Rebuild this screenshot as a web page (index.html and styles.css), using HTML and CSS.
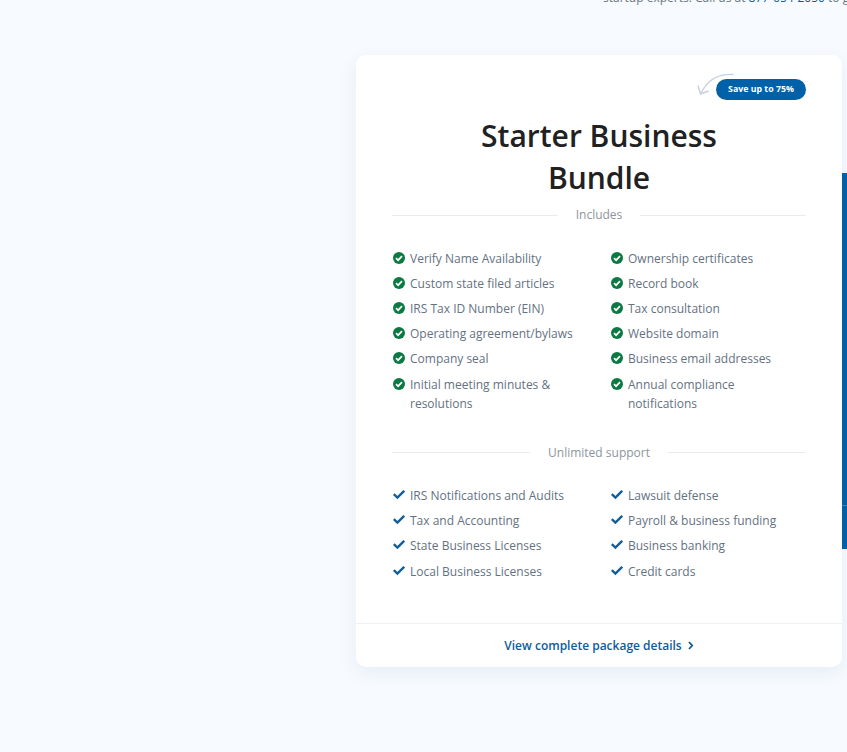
FILE: index.html
```html
<!DOCTYPE html>
<html lang="en">
<head>
  <meta charset="UTF-8" />
  <title>Starter Business Bundle</title>
  <link rel="stylesheet" href="styles.css">
</head>
<body>
  <p class="intro">startup experts. Call us at <a href="#">877-654-2050</a> to get</p>

  <div class="layout">
    <section class="card">
      <div class="card-body">
        <div class="save-row">
          <svg class="save-arrow" width="38" height="24" viewBox="0 0 38 24" fill="none">
            <path d="M36.5 1.5C24 0.5 12 4.5 4 20" stroke="#c8d0dc" stroke-width="1.4" />
            <path d="M1 12.5L3.5 21L11.5 18" stroke="#c8d0dc" stroke-width="1.4" />
          </svg>
          <span class="save-badge">Save up to 75%</span>
        </div>

        <h2 class="card-title">Starter Business<br>Bundle</h2>

        <div class="divider"><span>Includes</span></div>
        <ul class="feature-list">
          <li><svg class="icon"><use href="#circle-check" /></svg>Verify Name Availability</li>
          <li><svg class="icon"><use href="#circle-check" /></svg>Ownership certificates</li>
          <li><svg class="icon"><use href="#circle-check" /></svg>Custom state filed articles</li>
          <li><svg class="icon"><use href="#circle-check" /></svg>Record book</li>
          <li><svg class="icon"><use href="#circle-check" /></svg>IRS Tax ID Number (EIN)</li>
          <li><svg class="icon"><use href="#circle-check" /></svg>Tax consultation</li>
          <li><svg class="icon"><use href="#circle-check" /></svg>Operating agreement/bylaws</li>
          <li><svg class="icon"><use href="#circle-check" /></svg>Website domain</li>
          <li><svg class="icon"><use href="#circle-check" /></svg>Company seal</li>
          <li><svg class="icon"><use href="#circle-check" /></svg>Business email addresses</li>
          <li><svg class="icon"><use href="#circle-check" /></svg>Initial meeting minutes &amp; resolutions</li>
          <li><svg class="icon"><use href="#circle-check" /></svg>Annual compliance notifications</li>
        </ul>

        <div class="divider divider-support"><span>Unlimited support</span></div>
        <ul class="feature-list feature-list-support">
          <li><svg class="icon"><use href="#check" /></svg>IRS Notifications and Audits</li>
          <li><svg class="icon"><use href="#check" /></svg>Lawsuit defense</li>
          <li><svg class="icon"><use href="#check" /></svg>Tax and Accounting</li>
          <li><svg class="icon"><use href="#check" /></svg>Payroll &amp; business funding</li>
          <li><svg class="icon"><use href="#check" /></svg>State Business Licenses</li>
          <li><svg class="icon"><use href="#check" /></svg>Business banking</li>
          <li><svg class="icon"><use href="#check" /></svg>Local Business Licenses</li>
          <li><svg class="icon"><use href="#check" /></svg>Credit cards</li>
        </ul>
      </div>

      <a class="card-footer" href="#">
        View complete package details
        <svg width="6" height="9" viewBox="0 0 6 9" fill="none">
          <path d="M1 1L4.2 4.5L1 8" stroke="#0f5c99" stroke-width="1.8" />
        </svg>
      </a>
    </section>

    <div class="side-panel"></div>
  </div>

  <svg width="0" height="0" class="icon-defs">
    <symbol id="circle-check" viewBox="0 0 12 12">
      <circle cx="6" cy="6" r="6" fill="#0a7a42" />
      <path d="M3 6.2L5.1 8.2L9 4.2" fill="none" stroke="#fff" stroke-width="1.7" />
    </symbol>
    <symbol id="check" viewBox="0 0 12 12">
      <path d="M0.8 5.2L4.4 8.6L11.2 1.8" fill="none" stroke="#115e9b" stroke-width="2.4" />
    </symbol>
  </svg>
</body>
</html>
```

FILE: styles.css
```css
* {
  box-sizing: border-box;
}

html,
body {
  height: 100%;
}

body {
  margin: 0;
  overflow: hidden;
  background: #f7fbff;
  font-family: "Open Sans", sans-serif;
  color: #64727f;
}

.intro {
  height: 55px;
  margin: -12px 0 12px;
  padding-left: 603px;
  font-size: 12px;
  line-height: 20px;
  white-space: nowrap;
  color: #6b7680;
}

.intro a {
  color: #0f5c99;
  text-decoration: none;
}

.layout {
  display: flex;
  margin-left: 356px;
}

.card {
  width: 486px;
  height: 612px;
  display: flex;
  flex-direction: column;
  background: #fff;
  border-radius: 10px;
  box-shadow: 0 6px 18px rgba(30, 70, 130, 0.08);
}

.card-body {
  flex: 1;
  padding: 24px 36px 0;
}

.save-row {
  display: flex;
  justify-content: flex-end;
  align-items: flex-start;
  height: 21px;
}

.save-arrow {
  margin: -6px -19px 0 0;
}

.save-badge {
  width: 90px;
  height: 21px;
  background: #0061a8;
  border-radius: 11px;
  color: #fff;
  font-size: 8.8px;
  font-weight: 700;
  line-height: 21px;
  text-align: center;
}

.card-title {
  margin: 15px 0 6px;
  font-size: 30px;
  font-weight: 600;
  line-height: 42px;
  text-align: center;
  color: #212121;
}

.divider {
  display: flex;
  align-items: center;
  gap: 18px;
  font-size: 12px;
  line-height: 20px;
  color: #8c959d;
}

.divider::before,
.divider::after {
  content: "";
  flex: 1;
  height: 1px;
  background: #e8ebee;
}

.divider-support {
  margin-top: 30px;
}

.divider-support::before,
.divider-support::after {
  margin-bottom: 2px;
}

.feature-list {
  display: grid;
  grid-template-columns: 218px 1fr;
  row-gap: 6px;
  margin: 23.6px 0 0;
  padding: 0;
  list-style: none;
  font-size: 12px;
  line-height: 19.2px;
}

.feature-list-support {
  margin-top: 23px;
}

.feature-list li {
  position: relative;
  padding: 0 20px 0 18px;
}

.icon {
  position: absolute;
  left: 1px;
  top: 3px;
  width: 12px;
  height: 12px;
}

.icon-defs {
  position: absolute;
}

.card-footer {
  display: flex;
  justify-content: center;
  align-items: center;
  gap: 6px;
  height: 44px;
  border-top: 1px solid #eef0f3;
  color: #0f5c99;
  font-size: 12px;
  font-weight: 600;
  text-decoration: none;
}

.side-panel {
  width: 5px;
  height: 376px;
  margin-top: 118px;
  background: linear-gradient(#0061a8 332px, #3d84bb 332px, #3d84bb 333px, #0061a8 333px);
}
```
